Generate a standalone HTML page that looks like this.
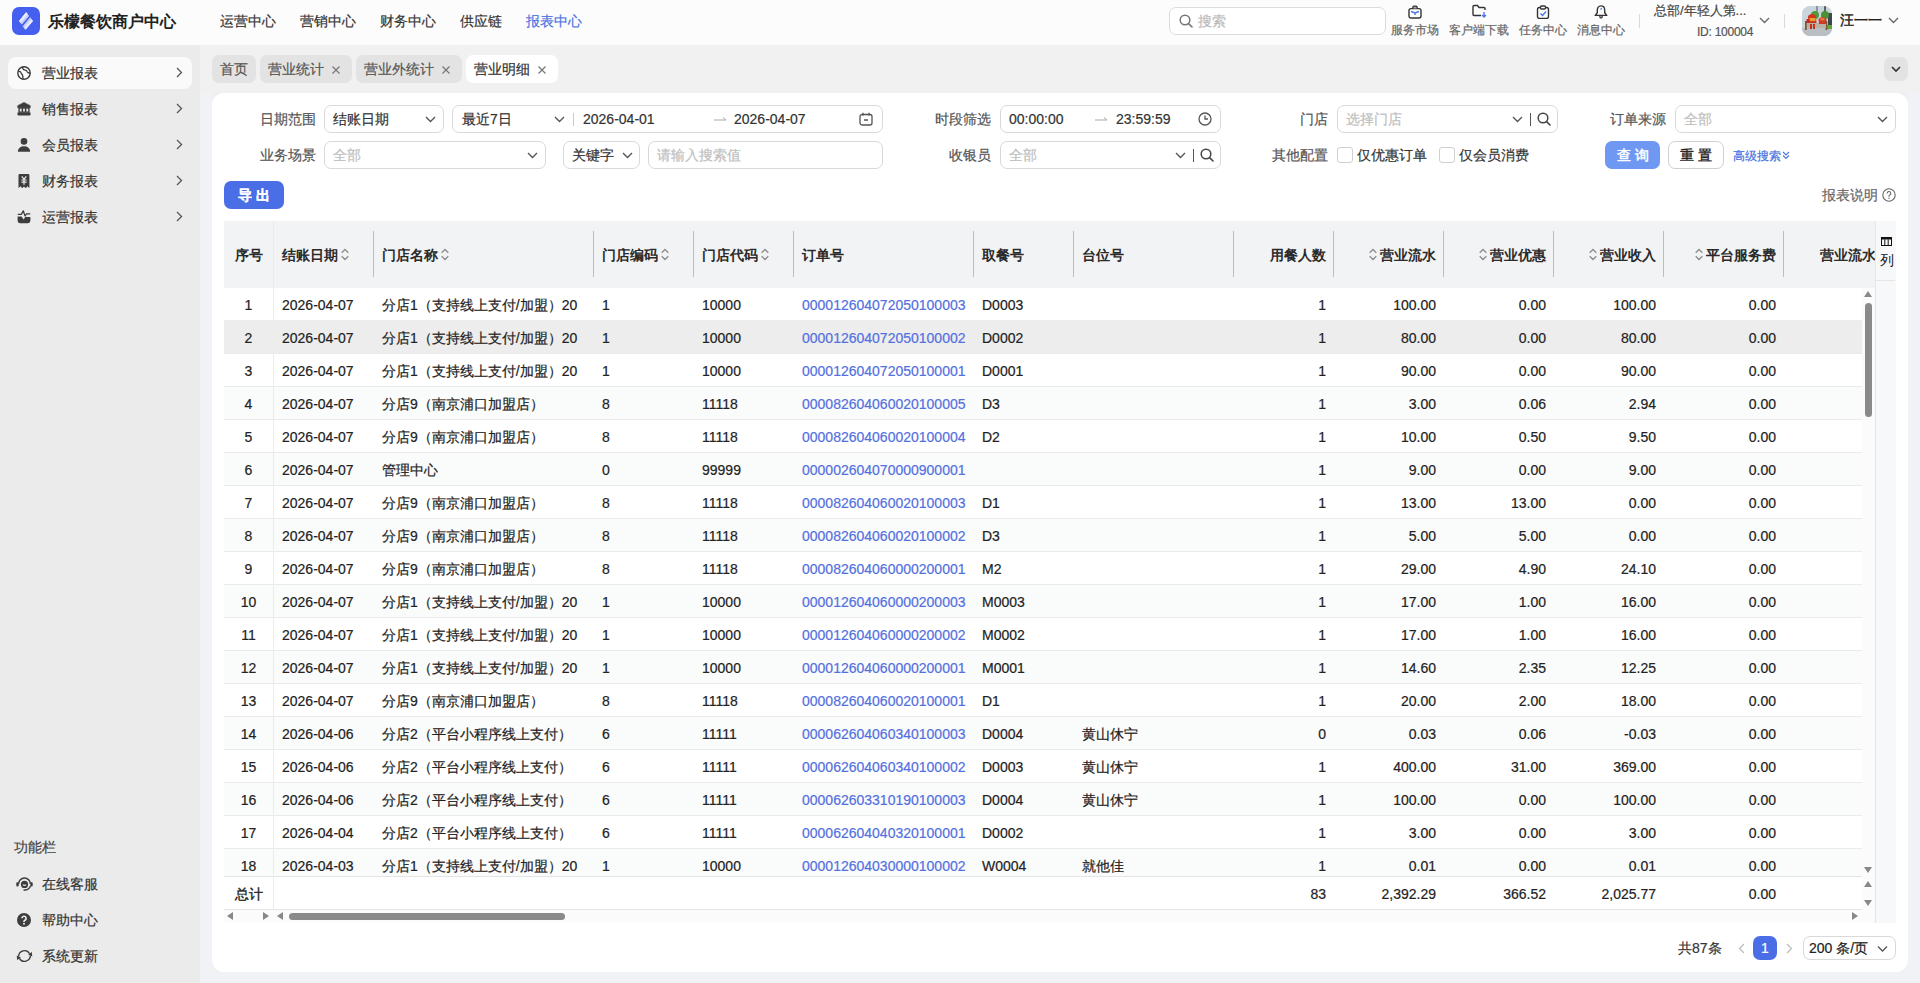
<!DOCTYPE html>
<html><head><meta charset="utf-8">
<style>
*{box-sizing:border-box;margin:0;padding:0}
html,body{width:1920px;height:983px;overflow:hidden}
body{font-family:"Liberation Sans",sans-serif;font-size:14px;color:#333;background:#f0f2f5;position:relative;-webkit-text-stroke:0.2px currentColor}
#band{position:absolute;left:200px;top:45px;width:1720px;height:48px;background:#f1f1f1}
#under{position:absolute;left:212px;top:93px;width:1696px;height:879px;background:#f0f0f0}
.abs{position:absolute}
svg{display:block}
/* header */
#hdr{position:absolute;left:0;top:0;width:1920px;height:45px;background:#fcfcfc}
#logo{position:absolute;left:12px;top:7px;width:28px;height:28px;border-radius:7px;background:#4560ef}
#brand{position:absolute;left:48px;top:11px;font-size:16px;font-weight:bold;color:#222;line-height:22px}
.nav{position:absolute;top:11px;line-height:20px;font-size:14px;color:#333}
.nav.on{color:#4a74e0}
#search{position:absolute;left:1169px;top:7px;width:217px;height:28px;border:1px solid #dcdcdc;border-radius:7px;background:#fff}
#search .ph{position:absolute;left:28px;top:4px;line-height:18px;color:#bbb;font-size:14px}
.tool{position:absolute;top:0;height:45px;text-align:center;font-size:12px;color:#666}
.tool .ic{position:absolute;top:5px;left:50%;margin-left:-7px}
.tool .tx{position:absolute;top:22px;left:0;right:0;line-height:16px;white-space:nowrap}
.vsep{position:absolute;width:1px;background:#d9d9d9}
/* sidebar */
#side{position:absolute;left:0;top:45px;width:200px;height:938px;background:#ebebeb}
.mi{position:absolute;left:8px;width:184px;height:32px;border-radius:8px}
.mi.on{background:#fafafa}
.mi .ic{position:absolute;left:9px;top:9px}
.mi .tx{position:absolute;left:34px;top:6px;line-height:20px;color:#333;font-size:14px}
.mi .ar{position:absolute;left:168px;top:10px}
/* tabs */
.tab{position:absolute;top:55px;height:28px;border-radius:7px;background:#e3e3e3;color:#555;font-size:14px;line-height:28px;padding-left:8px}
.tab.on{background:#fff;color:#333}
.tab .x{position:absolute;top:11px}
#tabdd{position:absolute;left:1884px;top:57px;width:24px;height:24px;border-radius:7px;background:#e3e3e3}
/* card */
#card{position:absolute;left:212px;top:93px;width:1696px;height:879px;background:#fff;border-radius:12px}
.lbl{position:absolute;line-height:20px;color:#555;font-size:14px;text-align:right}
.inp{position:absolute;height:28px;border:1px solid #d9d9d9;border-radius:7px;background:#fff}
.inp .t{position:absolute;top:3px;line-height:20px;font-size:14px;color:#333;white-space:nowrap}
.inp .ph{color:#c0c0c0}
.inp .cv{position:absolute;top:10px}
.inp .bar{position:absolute;top:7px;width:1px;height:13px;background:#555}
.cb{position:absolute;width:16px;height:16px;border:1px solid #d0d0d0;border-radius:3px;background:#fff}
.btn{position:absolute;height:28px;border-radius:7px;font-size:14px;line-height:26px;text-align:center;font-weight:bold;letter-spacing:4px;text-indent:4px}
/* table */
#tbl{position:absolute;left:224px;top:221px;width:1652px;height:702px;overflow:hidden}
#thead{position:absolute;left:0;top:0;width:1652px;height:67px;background:#f2f3f5}
.th{position:absolute;top:0;height:67px;line-height:69px;font-weight:bold;font-size:14px;color:#2a2a2a;padding:0 7px 0 9px;white-space:nowrap}
.th.c{text-align:center;padding:0}
.th,#brand{-webkit-text-stroke:0}
.th.r{text-align:right}
.th .sep{position:absolute;left:0;top:10px;width:1px;height:46px;background:#b9bdc8}
.th .sort{display:inline-block;vertical-align:middle;margin:0 3px 0 3px;position:relative;top:-2px}
#body{position:absolute;left:0;top:67px;width:1638px;height:588px;overflow:hidden}
.tr{position:absolute;left:0;width:1638px;height:33px;background:#fff;border-bottom:1px solid #ebebeb}
.tr.st{background:#fafbfb}
.tr.hv{background:#ededed}
.td{position:absolute;top:1px;height:32px;line-height:32px;padding:0 7px 0 9px;white-space:nowrap;overflow:hidden;font-size:14px;color:#222}
.td.c{text-align:center;padding:0}
.td.r{text-align:right}
.td.lk{color:#5470e0}
.fix1{position:absolute;left:49px;width:1px;background:#ececec}
#foot{position:absolute;left:0;top:655px;width:1638px;height:34px;background:#fff;border-top:1px solid #e4e4e4;border-bottom:1px solid #e4e4e4}
#foot .td{top:1px;height:32px;line-height:32px}
#foot .td.c{-webkit-text-stroke:0.35px #222}
#hscroll{position:absolute;left:0;top:689px;width:1652px;height:13px;background:#fbfbfb}
#vsc{position:absolute;left:1638px;top:67px;width:14px;height:622px;background:#fbfbfb}
#colpanel{position:absolute;left:1875px;top:221px;width:21px;height:702px;background:#f7f8fa;border-left:1px solid #e6e6e6}
.tri{position:absolute;width:0;height:0}
</style></head><body>
<div id="band"></div>
<div id="hdr">
  <div id="logo"><svg width="28" height="28" viewBox="0 0 28 28"><defs><linearGradient id="g1" gradientUnits="userSpaceOnUse" x1="10" y1="10" x2="13.5" y2="13"><stop offset="0" stop-color="#fff"/><stop offset="1" stop-color="#b9c3fa"/></linearGradient><linearGradient id="g2" gradientUnits="userSpaceOnUse" x1="18" y1="18" x2="14.5" y2="15"><stop offset="0" stop-color="#fff"/><stop offset="1" stop-color="#b9c3fa"/></linearGradient></defs><path d="M14.2 5.6 L16.7 9.1 L9.8 17.1 L7.4 14 Z" fill="url(#g1)" stroke="url(#g1)" stroke-width="0.9" stroke-linejoin="round"/><path d="M18.1 10.7 L20.6 14 L13.5 22.3 L11.1 19.3 Z" fill="url(#g2)" stroke="url(#g2)" stroke-width="0.9" stroke-linejoin="round"/></svg></div>
  <div id="brand">乐檬餐饮商户中心</div>
  <div class="nav" style="left:220px">运营中心</div>
  <div class="nav" style="left:300px">营销中心</div>
  <div class="nav" style="left:380px">财务中心</div>
  <div class="nav" style="left:460px">供应链</div>
  <div class="nav on" style="left:526px">报表中心</div>
  <div id="search"><div class="abs" style="left:9px;top:6px"><svg width="14" height="14" viewBox="0 0 14 14"><circle cx="6" cy="6" r="4.8" fill="none" stroke="#777" stroke-width="1.5"/><path d="M9.6 9.6L13 13" stroke="#777" stroke-width="1.6" stroke-linecap="round"/></svg></div><div class="ph">搜索</div></div>
  <div class="tool" style="left:1391px;width:48px"><div class="ic"><svg width="14" height="14" viewBox="0 0 14 14"><rect x="1" y="3.6" width="12" height="9.4" rx="2" fill="#fff" stroke="#333" stroke-width="1.4"/><path d="M4.9 3.6V2.3Q4.9 1.2 6 1.2H8Q9.1 1.2 9.1 2.3V3.6" fill="#aaa" stroke="#333" stroke-width="1.3"/><path d="M3 6.5l4 1.5 4-1.5M7 8v2" fill="none" stroke="#4a74f0" stroke-width="1.4"/></svg></div><div class="tx">服务市场</div></div>
  <div class="tool" style="left:1449px;width:60px"><div class="ic" style="margin-left:-7px;top:4px"><svg width="16" height="14" viewBox="0 0 16 14"><path d="M13 6V4.5c0-.6-.4-1-1-1H7L5.5 1.5H2c-.6 0-1 .4-1 1v8c0 .6.4 1 1 1h7" fill="none" stroke="#333" stroke-width="1.4"/><path d="M12 8v5M10 11l2 2 2-2" fill="none" stroke="#4a74f0" stroke-width="1.4"/></svg></div><div class="tx">客户端下载</div></div>
  <div class="tool" style="left:1519px;width:48px"><div class="ic"><svg width="14" height="14" viewBox="0 0 14 14"><rect x="1.5" y="2.5" width="11" height="11" rx="2" fill="none" stroke="#333" stroke-width="1.4"/><rect x="4.5" y="1" width="5" height="3" rx="1" fill="#fcfcfc" stroke="#333" stroke-width="1.3"/><path d="M4.5 8.5l2 2 3.5-4" fill="none" stroke="#4a74f0" stroke-width="1.4"/></svg></div><div class="tx">任务中心</div></div>
  <div class="tool" style="left:1577px;width:48px"><div class="ic"><svg width="14" height="14" viewBox="0 0 14 14"><path d="M7 .9C4.6 .9 3.3 2.9 3.3 5.2V7.8L1.2 10.4H12.8L10.7 7.8V5.2C10.7 2.9 9.4 .9 7 .9Z" fill="none" stroke="#333" stroke-width="1.4" stroke-linejoin="round"/><path d="M5.9 10.6V11.7Q5.9 12.9 7 12.9 8.1 12.9 8.1 11.7V10.6" fill="none" stroke="#333" stroke-width="1.3"/><path d="M6.6 4.6L7.6 3.1" stroke="#4a74f0" stroke-width="1.2" fill="none"/></svg></div><div class="tx">消息中心</div></div>
  <div class="vsep" style="left:1639px;top:14px;height:14px"></div>
  <div class="abs" style="left:1654px;top:3px;line-height:16px;font-size:13px;color:#444;white-space:nowrap">总部/年轻人第...</div>
  <div class="abs" style="left:1697px;top:24px;line-height:16px;font-size:12px;color:#555;white-space:nowrap;letter-spacing:-0.25px">ID: 100004</div>
  <div class="abs" style="left:1759px;top:17px"><svg width="11" height="7" viewBox="0 0 11 7"><path d="M1 1l4.5 4.5L10 1" fill="none" stroke="#666" stroke-width="1.3"/></svg></div>
  <div class="vsep" style="left:1784px;top:14px;height:14px"></div>
  <div class="abs" style="left:1802px;top:6px;width:30px;height:30px;border-radius:8px;overflow:hidden"><svg width="30" height="30" viewBox="0 0 30 30"><rect width="30" height="30" fill="#c9d5dc"/><rect x="14" y="0" width="2" height="10" fill="#8c969c"/><rect x="22" y="0" width="2" height="8" fill="#5a6268"/><rect x="26" y="7" width="4" height="12" fill="#3f474c"/><circle cx="13" cy="9" r="4" fill="#4f9a3c"/><circle cx="23" cy="9" r="4" fill="#4a9238"/><rect x="0" y="22" width="30" height="8" fill="#b9bec2"/><rect x="25" y="19" width="5" height="4" fill="#5aa83c"/><rect x="3" y="15" width="1.8" height="9" fill="#7a5a30"/><rect x="23.5" y="15" width="1.8" height="9" fill="#7a5a30"/><rect x="5" y="17" width="19" height="5" fill="#b8b2a6"/><path d="M6 10 Q10 6 14 10 L14.5 17 H6.5 Z" fill="#d4341c"/><rect x="7.5" y="12" width="6" height="3" fill="#e8a030"/><rect x="4.5" y="13" width="3" height="4" fill="#c42818"/><rect x="8" y="18" width="2" height="5" fill="#d22a1a"/><rect x="11" y="18" width="2" height="5" fill="#d22a1a"/><path d="M16.5 13 Q20.5 9 24.5 13 L24 18 H17 Z" fill="#cf3a22"/><rect x="18.5" y="12" width="4" height="2.5" fill="#e07a40"/></svg></div>
  <div class="abs" style="left:1840px;top:10px;line-height:20px;font-size:14px;color:#222;-webkit-text-stroke:0.45px #222">汪一一</div>
  <div class="abs" style="left:1888px;top:17px"><svg width="11" height="7" viewBox="0 0 11 7"><path d="M1 1l4.5 4.5L10 1" fill="none" stroke="#666" stroke-width="1.3"/></svg></div>
</div>

<div id="side">
  <div class="mi on" style="top:12px"><div class="ic"><svg width="14" height="14" viewBox="0 0 14 14"><circle cx="7" cy="7" r="6.2" fill="none" stroke="#3a3a3a" stroke-width="1.4"/><path d="M1.2 5.4c1.5-.3 2.7.5 3 1.7.3 1.3 1.4 1.6 1.6 2.8.2 1-.2 2.2.3 3.3M5.9.9c-.5 1.3.1 2.6 1.4 3 1.3.3 2.5.5 2.8 1.8.3 1.1 1.5 1.5 3 1.2" fill="none" stroke="#3a3a3a" stroke-width="1.3"/></svg></div><div class="tx">营业报表</div><div class="ar"><svg width="7" height="11" viewBox="0 0 7 11"><path d="M1 1l4.5 4.5L1 10" fill="none" stroke="#555" stroke-width="1.3"/></svg></div></div>
  <div class="mi" style="top:48px"><div class="ic"><svg width="14" height="14" viewBox="0 0 14 14"><path d="M7 .4L13.3 3.7V5.7H.7V3.7z" fill="#3d3d3d" stroke="#3d3d3d" stroke-width=".6" stroke-linejoin="round"/><rect x="1.4" y="5.5" width="11.2" height="5" fill="#3d3d3d"/><rect x=".5" y="10.2" width="13" height="3.4" rx="1" fill="#3d3d3d"/><rect x="2.8" y="6.7" width="1.8" height="2.8" fill="#ebebeb"/><rect x="6.1" y="6.7" width="1.8" height="2.8" fill="#ebebeb"/><rect x="9.4" y="6.7" width="1.8" height="2.8" fill="#ebebeb"/></svg></div><div class="tx">销售报表</div><div class="ar"><svg width="7" height="11" viewBox="0 0 7 11"><path d="M1 1l4.5 4.5L1 10" fill="none" stroke="#555" stroke-width="1.3"/></svg></div></div>
  <div class="mi" style="top:84px"><div class="ic"><svg width="14" height="14" viewBox="0 0 14 14"><circle cx="7" cy="3.4" r="3.3" fill="#3d3d3d"/><path d="M.9 13.8C.9 10.2 3.7 8.3 7 8.3s6.1 1.9 6.1 5.5z" fill="#3d3d3d"/></svg></div><div class="tx">会员报表</div><div class="ar"><svg width="7" height="11" viewBox="0 0 7 11"><path d="M1 1l4.5 4.5L1 10" fill="none" stroke="#555" stroke-width="1.3"/></svg></div></div>
  <div class="mi" style="top:120px"><div class="ic"><svg width="14" height="14" viewBox="0 0 14 14"><path d="M1.5 1.2Q1.5 0 2.7 0H11.2Q12.4 0 12.4 1.2V14.2L10.5 12.2 8.7 14.2 7 12.4 5.2 14.2 3.4 12.2 1.5 14.2z" fill="#3d3d3d"/><path d="M4.7 2.4L7 5.2 9.3 2.4M4.4 6H9.6M4.4 8.2H9.6M7 5.2V10.8" fill="none" stroke="#ebebeb" stroke-width="1.2"/></svg></div><div class="tx">财务报表</div><div class="ar"><svg width="7" height="11" viewBox="0 0 7 11"><path d="M1 1l4.5 4.5L1 10" fill="none" stroke="#555" stroke-width="1.3"/></svg></div></div>
  <div class="mi" style="top:156px"><div class="ic"><svg width="14" height="14" viewBox="0 0 14 14"><path d="M.8 4.3H4.3L6.3.9 8 5.8 9.6 3.8H13.2" fill="none" stroke="#3d3d3d" stroke-width="1.3" stroke-linejoin="round"/><path d="M.6 6.4H4.6L6.6 9.4 8.5 6.5 9.6 7H13.4V10.8Q13.4 13.2 11 13.2H3Q.6 13.2 .6 10.8z" fill="#3d3d3d"/></svg></div><div class="tx">运营报表</div><div class="ar"><svg width="7" height="11" viewBox="0 0 7 11"><path d="M1 1l4.5 4.5L1 10" fill="none" stroke="#555" stroke-width="1.3"/></svg></div></div>

  <div class="abs" style="left:14px;top:792px;line-height:20px;color:#444;font-size:14px">功能栏</div>
  <div class="mi" style="top:823px"><div class="ic" style="left:8px;top:9px"><svg width="17" height="14" viewBox="0 0 17 14"><path d="M2.6 7A5.9 5.9 0 0 1 14.4 7" fill="none" stroke="#3d3d3d" stroke-width="1.5"/><rect x=".3" y="5.2" width="2.4" height="4.2" rx=".9" fill="#3d3d3d"/><rect x="14.3" y="5.2" width="2.4" height="4.2" rx=".9" fill="#3d3d3d"/><circle cx="8.5" cy="7.4" r="3.6" fill="#3d3d3d"/><path d="M6.9 7.6Q8.5 9.1 10.1 7.6" fill="none" stroke="#ebebeb" stroke-width="1.1"/><path d="M14.4 9A5.9 5.9 0 0 1 9.5 13H7.5" fill="none" stroke="#3d3d3d" stroke-width="1.4"/></svg></div><div class="tx">在线客服</div></div>
  <div class="mi" style="top:859px"><div class="ic"><svg width="14" height="14" viewBox="0 0 14 14"><circle cx="7" cy="7" r="7" fill="#3d3d3d"/><path d="M4.9 5.3a2.1 2.1 0 1 1 3 1.9c-.6.3-.9.7-.9 1.4v.4" fill="none" stroke="#ebebeb" stroke-width="1.6"/><circle cx="7" cy="10.7" r="1" fill="#ebebeb"/></svg></div><div class="tx">帮助中心</div></div>
  <div class="mi" style="top:895px"><div class="ic" style="left:8px"><svg width="17" height="14" viewBox="0 0 17 14"><path d="M2.6 7.4A5.9 5.9 0 0 1 13.6 4.6" fill="none" stroke="#3d3d3d" stroke-width="1.4"/><path d="M12.2 5.5L16.2 7.6 15.9 3z" fill="#3d3d3d"/><path d="M14.4 6.6A5.9 5.9 0 0 1 3.4 9.4" fill="none" stroke="#3d3d3d" stroke-width="1.4"/><path d="M4.8 8.5L.8 6.4 1.1 11z" fill="#3d3d3d"/></svg></div><div class="tx">系统更新</div></div>
</div>

<div class="tab" style="left:212px;width:44px">首页</div>
<div class="tab" style="left:260px;width:92px">营业统计<svg class="x" style="left:72px" width="8" height="8" viewBox="0 0 8 8"><path d="M.5.5l7 7M7.5.5l-7 7" stroke="#777" stroke-width="1.2"/></svg></div>
<div class="tab" style="left:356px;width:106px">营业外统计<svg class="x" style="left:86px" width="8" height="8" viewBox="0 0 8 8"><path d="M.5.5l7 7M7.5.5l-7 7" stroke="#777" stroke-width="1.2"/></svg></div>
<div class="tab on" style="left:466px;width:92px">营业明细<svg class="x" style="left:72px" width="8" height="8" viewBox="0 0 8 8"><path d="M.5.5l7 7M7.5.5l-7 7" stroke="#777" stroke-width="1.2"/></svg></div>
<div id="tabdd"><div class="abs" style="left:7px;top:9px"><svg width="10" height="7" viewBox="0 0 10 7"><path d="M1 1l4 4 4-4" fill="none" stroke="#333" stroke-width="1.6"/></svg></div></div>

<div id="under"></div><div id="card"></div>

<!-- filters row 1 -->
<div class="lbl" style="left:240px;top:109px;width:76px">日期范围</div>
<div class="inp" style="left:324px;top:105px;width:120px"><div class="t" style="left:8px">结账日期</div><div class="cv" style="left:100px"><svg width="11" height="7" viewBox="0 0 11 7"><path d="M1 1l4.5 4.5L10 1" fill="none" stroke="#555" stroke-width="1.4"/></svg></div></div>
<div class="inp" style="left:452px;top:105px;width:431px"><div class="t" style="left:9px">最近7日</div><div class="cv" style="left:101px"><svg width="11" height="7" viewBox="0 0 11 7"><path d="M1 1l4.5 4.5L10 1" fill="none" stroke="#555" stroke-width="1.4"/></svg></div><div class="bar" style="left:120px;background:#ccc"></div><div class="t" style="left:130px">2026-04-01</div><div class="abs" style="left:261px;top:11px"><svg width="13" height="4" viewBox="0 0 13 4"><path d="M0 3h12L9 .5" fill="none" stroke="#aaa" stroke-width="1"/></svg></div><div class="t" style="left:281px">2026-04-07</div><div class="abs" style="left:406px;top:6px"><svg width="14" height="14" viewBox="0 0 14 14"><rect x="1" y="2.5" width="12" height="10.5" rx="2" fill="none" stroke="#555" stroke-width="1.3"/><path d="M4 .8v3M10 .8v3M5 8h4" stroke="#555" stroke-width="1.3"/></svg></div></div>
<div class="lbl" style="left:915px;top:109px;width:76px">时段筛选</div>
<div class="inp" style="left:1000px;top:105px;width:221px"><div class="t" style="left:8px">00:00:00</div><div class="abs" style="left:94px;top:11px"><svg width="13" height="4" viewBox="0 0 13 4"><path d="M0 3h12L9 .5" fill="none" stroke="#aaa" stroke-width="1"/></svg></div><div class="t" style="left:115px">23:59:59</div><div class="abs" style="left:197px;top:6px"><svg width="14" height="14" viewBox="0 0 14 14"><circle cx="7" cy="7" r="6" fill="none" stroke="#555" stroke-width="1.3"/><path d="M7 3.5V7h3" fill="none" stroke="#555" stroke-width="1.3"/></svg></div></div>
<div class="lbl" style="left:1252px;top:109px;width:76px">门店</div>
<div class="inp" style="left:1337px;top:105px;width:221px"><div class="t ph" style="left:8px">选择门店</div><div class="cv" style="left:174px"><svg width="11" height="7" viewBox="0 0 11 7"><path d="M1 1l4.5 4.5L10 1" fill="none" stroke="#555" stroke-width="1.4"/></svg></div><div class="bar" style="left:192px"></div><div class="abs" style="left:199px;top:6px"><svg width="14" height="14" viewBox="0 0 14 14"><circle cx="6" cy="6" r="4.8" fill="none" stroke="#444" stroke-width="1.5"/><path d="M9.6 9.6L13 13" stroke="#444" stroke-width="1.6" stroke-linecap="round"/></svg></div></div>
<div class="lbl" style="left:1590px;top:109px;width:76px">订单来源</div>
<div class="inp" style="left:1675px;top:105px;width:221px"><div class="t ph" style="left:8px">全部</div><div class="cv" style="left:201px"><svg width="11" height="7" viewBox="0 0 11 7"><path d="M1 1l4.5 4.5L10 1" fill="none" stroke="#555" stroke-width="1.4"/></svg></div></div>

<!-- filters row 2 -->
<div class="lbl" style="left:240px;top:145px;width:76px">业务场景</div>
<div class="inp" style="left:324px;top:141px;width:222px"><div class="t ph" style="left:8px">全部</div><div class="cv" style="left:202px"><svg width="11" height="7" viewBox="0 0 11 7"><path d="M1 1l4.5 4.5L10 1" fill="none" stroke="#555" stroke-width="1.4"/></svg></div></div>
<div class="inp" style="left:563px;top:141px;width:77px"><div class="t" style="left:8px">关键字</div><div class="cv" style="left:58px"><svg width="11" height="7" viewBox="0 0 11 7"><path d="M1 1l4.5 4.5L10 1" fill="none" stroke="#555" stroke-width="1.4"/></svg></div></div>
<div class="inp" style="left:648px;top:141px;width:235px"><div class="t ph" style="left:8px">请输入搜索值</div></div>
<div class="lbl" style="left:915px;top:145px;width:76px">收银员</div>
<div class="inp" style="left:1000px;top:141px;width:221px"><div class="t ph" style="left:8px">全部</div><div class="cv" style="left:174px"><svg width="11" height="7" viewBox="0 0 11 7"><path d="M1 1l4.5 4.5L10 1" fill="none" stroke="#555" stroke-width="1.4"/></svg></div><div class="bar" style="left:192px"></div><div class="abs" style="left:199px;top:6px"><svg width="14" height="14" viewBox="0 0 14 14"><circle cx="6" cy="6" r="4.8" fill="none" stroke="#444" stroke-width="1.5"/><path d="M9.6 9.6L13 13" stroke="#444" stroke-width="1.6" stroke-linecap="round"/></svg></div></div>
<div class="lbl" style="left:1252px;top:145px;width:76px">其他配置</div>
<div class="cb" style="left:1337px;top:147px"></div>
<div class="abs" style="left:1357px;top:145px;line-height:20px;color:#333">仅优惠订单</div>
<div class="cb" style="left:1439px;top:147px"></div>
<div class="abs" style="left:1459px;top:145px;line-height:20px;color:#333">仅会员消费</div>
<div class="btn" style="left:1605px;top:141px;width:55px;background:#6e98f2;color:#fff;line-height:28px;font-weight:normal;-webkit-text-stroke:0.5px #fff">查询</div>
<div class="btn" style="left:1668px;top:141px;width:56px;border:1px solid #d0d0d0;background:#fff;color:#222;font-weight:normal;-webkit-text-stroke:0.35px #222">重置</div>
<div class="abs" style="left:1733px;top:148px;line-height:16px;font-size:12px;color:#4a74e0;white-space:nowrap">高级搜索</div>
<div class="abs" style="left:1782px;top:151px"><svg width="8" height="9" viewBox="0 0 8 9"><path d="M1 1l3 3 3-3M1 4.5l3 3 3-3" fill="none" stroke="#4a74e0" stroke-width="1.1"/></svg></div>

<div class="btn" style="left:224px;top:181px;width:60px;background:#4a6ee6;color:#fff;line-height:28px">导出</div>
<div class="abs" style="left:1822px;top:185px;line-height:20px;color:#666">报表说明</div>
<div class="abs" style="left:1882px;top:188px"><svg width="14" height="14" viewBox="0 0 14 14"><circle cx="7" cy="7" r="6.2" fill="none" stroke="#666" stroke-width="1.1"/><path d="M5.2 5.4a1.8 1.8 0 1 1 2.5 1.6c-.5.3-.7.6-.7 1.2v.5" fill="none" stroke="#666" stroke-width="1.1"/><circle cx="7" cy="10.3" r=".7" fill="#666"/></svg></div>

<div id="tbl">
  <div id="thead"><div class="th c" style="left:0px;width:49px">序号</div><div class="th l" style="left:49px;width:100px">结账日期<svg class="sort" width="8" height="13" viewBox="0 0 8 13"><path d="M.7 4.8L4 1.5l3.3 3.3M.7 8.2L4 11.5l3.3-3.3" fill="none" stroke="#8c8c8c" stroke-width="1.25"/></svg></div><div class="th l" style="left:149px;width:220px"><span class="sep"></span>门店名称<svg class="sort" width="8" height="13" viewBox="0 0 8 13"><path d="M.7 4.8L4 1.5l3.3 3.3M.7 8.2L4 11.5l3.3-3.3" fill="none" stroke="#8c8c8c" stroke-width="1.25"/></svg></div><div class="th l" style="left:369px;width:100px"><span class="sep"></span>门店编码<svg class="sort" width="8" height="13" viewBox="0 0 8 13"><path d="M.7 4.8L4 1.5l3.3 3.3M.7 8.2L4 11.5l3.3-3.3" fill="none" stroke="#8c8c8c" stroke-width="1.25"/></svg></div><div class="th l" style="left:469px;width:100px"><span class="sep"></span>门店代码<svg class="sort" width="8" height="13" viewBox="0 0 8 13"><path d="M.7 4.8L4 1.5l3.3 3.3M.7 8.2L4 11.5l3.3-3.3" fill="none" stroke="#8c8c8c" stroke-width="1.25"/></svg></div><div class="th l" style="left:569px;width:180px"><span class="sep"></span>订单号</div><div class="th l" style="left:749px;width:100px"><span class="sep"></span>取餐号</div><div class="th l" style="left:849px;width:160px"><span class="sep"></span>台位号</div><div class="th r" style="left:1009px;width:100px"><span class="sep"></span>用餐人数</div><div class="th r" style="left:1109px;width:110px"><span class="sep"></span><svg class="sort" width="8" height="13" viewBox="0 0 8 13"><path d="M.7 4.8L4 1.5l3.3 3.3M.7 8.2L4 11.5l3.3-3.3" fill="none" stroke="#8c8c8c" stroke-width="1.25"/></svg>营业流水</div><div class="th r" style="left:1219px;width:110px"><span class="sep"></span><svg class="sort" width="8" height="13" viewBox="0 0 8 13"><path d="M.7 4.8L4 1.5l3.3 3.3M.7 8.2L4 11.5l3.3-3.3" fill="none" stroke="#8c8c8c" stroke-width="1.25"/></svg>营业优惠</div><div class="th r" style="left:1329px;width:110px"><span class="sep"></span><svg class="sort" width="8" height="13" viewBox="0 0 8 13"><path d="M.7 4.8L4 1.5l3.3 3.3M.7 8.2L4 11.5l3.3-3.3" fill="none" stroke="#8c8c8c" stroke-width="1.25"/></svg>营业收入</div><div class="th r" style="left:1439px;width:120px"><span class="sep"></span><svg class="sort" width="8" height="13" viewBox="0 0 8 13"><path d="M.7 4.8L4 1.5l3.3 3.3M.7 8.2L4 11.5l3.3-3.3" fill="none" stroke="#8c8c8c" stroke-width="1.25"/></svg>平台服务费</div><div class="th r" style="left:1559px;width:100px"><span class="sep"></span>营业流水</div></div>
  <div id="body">
<div class="tr" style="top:0px"><div class="td c" style="left:0px;width:49px">1</div><div class="td l" style="left:49px;width:100px">2026-04-07</div><div class="td l" style="left:149px;width:220px">分店1（支持线上支付/加盟）20</div><div class="td l" style="left:369px;width:100px">1</div><div class="td l" style="left:469px;width:100px">10000</div><div class="td l lk" style="left:569px;width:180px">000012604072050100003</div><div class="td l" style="left:749px;width:100px">D0003</div><div class="td l" style="left:849px;width:160px"></div><div class="td r" style="left:1009px;width:100px">1</div><div class="td r" style="left:1109px;width:110px">100.00</div><div class="td r" style="left:1219px;width:110px">0.00</div><div class="td r" style="left:1329px;width:110px">100.00</div><div class="td r" style="left:1439px;width:120px">0.00</div><div class="td r" style="left:1559px;width:100px"></div></div>
<div class="tr st hv" style="top:33px"><div class="td c" style="left:0px;width:49px">2</div><div class="td l" style="left:49px;width:100px">2026-04-07</div><div class="td l" style="left:149px;width:220px">分店1（支持线上支付/加盟）20</div><div class="td l" style="left:369px;width:100px">1</div><div class="td l" style="left:469px;width:100px">10000</div><div class="td l lk" style="left:569px;width:180px">000012604072050100002</div><div class="td l" style="left:749px;width:100px">D0002</div><div class="td l" style="left:849px;width:160px"></div><div class="td r" style="left:1009px;width:100px">1</div><div class="td r" style="left:1109px;width:110px">80.00</div><div class="td r" style="left:1219px;width:110px">0.00</div><div class="td r" style="left:1329px;width:110px">80.00</div><div class="td r" style="left:1439px;width:120px">0.00</div><div class="td r" style="left:1559px;width:100px"></div></div>
<div class="tr" style="top:66px"><div class="td c" style="left:0px;width:49px">3</div><div class="td l" style="left:49px;width:100px">2026-04-07</div><div class="td l" style="left:149px;width:220px">分店1（支持线上支付/加盟）20</div><div class="td l" style="left:369px;width:100px">1</div><div class="td l" style="left:469px;width:100px">10000</div><div class="td l lk" style="left:569px;width:180px">000012604072050100001</div><div class="td l" style="left:749px;width:100px">D0001</div><div class="td l" style="left:849px;width:160px"></div><div class="td r" style="left:1009px;width:100px">1</div><div class="td r" style="left:1109px;width:110px">90.00</div><div class="td r" style="left:1219px;width:110px">0.00</div><div class="td r" style="left:1329px;width:110px">90.00</div><div class="td r" style="left:1439px;width:120px">0.00</div><div class="td r" style="left:1559px;width:100px"></div></div>
<div class="tr st" style="top:99px"><div class="td c" style="left:0px;width:49px">4</div><div class="td l" style="left:49px;width:100px">2026-04-07</div><div class="td l" style="left:149px;width:220px">分店9（南京浦口加盟店）</div><div class="td l" style="left:369px;width:100px">8</div><div class="td l" style="left:469px;width:100px">11118</div><div class="td l lk" style="left:569px;width:180px">000082604060020100005</div><div class="td l" style="left:749px;width:100px">D3</div><div class="td l" style="left:849px;width:160px"></div><div class="td r" style="left:1009px;width:100px">1</div><div class="td r" style="left:1109px;width:110px">3.00</div><div class="td r" style="left:1219px;width:110px">0.06</div><div class="td r" style="left:1329px;width:110px">2.94</div><div class="td r" style="left:1439px;width:120px">0.00</div><div class="td r" style="left:1559px;width:100px"></div></div>
<div class="tr" style="top:132px"><div class="td c" style="left:0px;width:49px">5</div><div class="td l" style="left:49px;width:100px">2026-04-07</div><div class="td l" style="left:149px;width:220px">分店9（南京浦口加盟店）</div><div class="td l" style="left:369px;width:100px">8</div><div class="td l" style="left:469px;width:100px">11118</div><div class="td l lk" style="left:569px;width:180px">000082604060020100004</div><div class="td l" style="left:749px;width:100px">D2</div><div class="td l" style="left:849px;width:160px"></div><div class="td r" style="left:1009px;width:100px">1</div><div class="td r" style="left:1109px;width:110px">10.00</div><div class="td r" style="left:1219px;width:110px">0.50</div><div class="td r" style="left:1329px;width:110px">9.50</div><div class="td r" style="left:1439px;width:120px">0.00</div><div class="td r" style="left:1559px;width:100px"></div></div>
<div class="tr st" style="top:165px"><div class="td c" style="left:0px;width:49px">6</div><div class="td l" style="left:49px;width:100px">2026-04-07</div><div class="td l" style="left:149px;width:220px">管理中心</div><div class="td l" style="left:369px;width:100px">0</div><div class="td l" style="left:469px;width:100px">99999</div><div class="td l lk" style="left:569px;width:180px">000002604070000900001</div><div class="td l" style="left:749px;width:100px"></div><div class="td l" style="left:849px;width:160px"></div><div class="td r" style="left:1009px;width:100px">1</div><div class="td r" style="left:1109px;width:110px">9.00</div><div class="td r" style="left:1219px;width:110px">0.00</div><div class="td r" style="left:1329px;width:110px">9.00</div><div class="td r" style="left:1439px;width:120px">0.00</div><div class="td r" style="left:1559px;width:100px"></div></div>
<div class="tr" style="top:198px"><div class="td c" style="left:0px;width:49px">7</div><div class="td l" style="left:49px;width:100px">2026-04-07</div><div class="td l" style="left:149px;width:220px">分店9（南京浦口加盟店）</div><div class="td l" style="left:369px;width:100px">8</div><div class="td l" style="left:469px;width:100px">11118</div><div class="td l lk" style="left:569px;width:180px">000082604060020100003</div><div class="td l" style="left:749px;width:100px">D1</div><div class="td l" style="left:849px;width:160px"></div><div class="td r" style="left:1009px;width:100px">1</div><div class="td r" style="left:1109px;width:110px">13.00</div><div class="td r" style="left:1219px;width:110px">13.00</div><div class="td r" style="left:1329px;width:110px">0.00</div><div class="td r" style="left:1439px;width:120px">0.00</div><div class="td r" style="left:1559px;width:100px"></div></div>
<div class="tr st" style="top:231px"><div class="td c" style="left:0px;width:49px">8</div><div class="td l" style="left:49px;width:100px">2026-04-07</div><div class="td l" style="left:149px;width:220px">分店9（南京浦口加盟店）</div><div class="td l" style="left:369px;width:100px">8</div><div class="td l" style="left:469px;width:100px">11118</div><div class="td l lk" style="left:569px;width:180px">000082604060020100002</div><div class="td l" style="left:749px;width:100px">D3</div><div class="td l" style="left:849px;width:160px"></div><div class="td r" style="left:1009px;width:100px">1</div><div class="td r" style="left:1109px;width:110px">5.00</div><div class="td r" style="left:1219px;width:110px">5.00</div><div class="td r" style="left:1329px;width:110px">0.00</div><div class="td r" style="left:1439px;width:120px">0.00</div><div class="td r" style="left:1559px;width:100px"></div></div>
<div class="tr" style="top:264px"><div class="td c" style="left:0px;width:49px">9</div><div class="td l" style="left:49px;width:100px">2026-04-07</div><div class="td l" style="left:149px;width:220px">分店9（南京浦口加盟店）</div><div class="td l" style="left:369px;width:100px">8</div><div class="td l" style="left:469px;width:100px">11118</div><div class="td l lk" style="left:569px;width:180px">000082604060000200001</div><div class="td l" style="left:749px;width:100px">M2</div><div class="td l" style="left:849px;width:160px"></div><div class="td r" style="left:1009px;width:100px">1</div><div class="td r" style="left:1109px;width:110px">29.00</div><div class="td r" style="left:1219px;width:110px">4.90</div><div class="td r" style="left:1329px;width:110px">24.10</div><div class="td r" style="left:1439px;width:120px">0.00</div><div class="td r" style="left:1559px;width:100px"></div></div>
<div class="tr st" style="top:297px"><div class="td c" style="left:0px;width:49px">10</div><div class="td l" style="left:49px;width:100px">2026-04-07</div><div class="td l" style="left:149px;width:220px">分店1（支持线上支付/加盟）20</div><div class="td l" style="left:369px;width:100px">1</div><div class="td l" style="left:469px;width:100px">10000</div><div class="td l lk" style="left:569px;width:180px">000012604060000200003</div><div class="td l" style="left:749px;width:100px">M0003</div><div class="td l" style="left:849px;width:160px"></div><div class="td r" style="left:1009px;width:100px">1</div><div class="td r" style="left:1109px;width:110px">17.00</div><div class="td r" style="left:1219px;width:110px">1.00</div><div class="td r" style="left:1329px;width:110px">16.00</div><div class="td r" style="left:1439px;width:120px">0.00</div><div class="td r" style="left:1559px;width:100px"></div></div>
<div class="tr" style="top:330px"><div class="td c" style="left:0px;width:49px">11</div><div class="td l" style="left:49px;width:100px">2026-04-07</div><div class="td l" style="left:149px;width:220px">分店1（支持线上支付/加盟）20</div><div class="td l" style="left:369px;width:100px">1</div><div class="td l" style="left:469px;width:100px">10000</div><div class="td l lk" style="left:569px;width:180px">000012604060000200002</div><div class="td l" style="left:749px;width:100px">M0002</div><div class="td l" style="left:849px;width:160px"></div><div class="td r" style="left:1009px;width:100px">1</div><div class="td r" style="left:1109px;width:110px">17.00</div><div class="td r" style="left:1219px;width:110px">1.00</div><div class="td r" style="left:1329px;width:110px">16.00</div><div class="td r" style="left:1439px;width:120px">0.00</div><div class="td r" style="left:1559px;width:100px"></div></div>
<div class="tr st" style="top:363px"><div class="td c" style="left:0px;width:49px">12</div><div class="td l" style="left:49px;width:100px">2026-04-07</div><div class="td l" style="left:149px;width:220px">分店1（支持线上支付/加盟）20</div><div class="td l" style="left:369px;width:100px">1</div><div class="td l" style="left:469px;width:100px">10000</div><div class="td l lk" style="left:569px;width:180px">000012604060000200001</div><div class="td l" style="left:749px;width:100px">M0001</div><div class="td l" style="left:849px;width:160px"></div><div class="td r" style="left:1009px;width:100px">1</div><div class="td r" style="left:1109px;width:110px">14.60</div><div class="td r" style="left:1219px;width:110px">2.35</div><div class="td r" style="left:1329px;width:110px">12.25</div><div class="td r" style="left:1439px;width:120px">0.00</div><div class="td r" style="left:1559px;width:100px"></div></div>
<div class="tr" style="top:396px"><div class="td c" style="left:0px;width:49px">13</div><div class="td l" style="left:49px;width:100px">2026-04-07</div><div class="td l" style="left:149px;width:220px">分店9（南京浦口加盟店）</div><div class="td l" style="left:369px;width:100px">8</div><div class="td l" style="left:469px;width:100px">11118</div><div class="td l lk" style="left:569px;width:180px">000082604060020100001</div><div class="td l" style="left:749px;width:100px">D1</div><div class="td l" style="left:849px;width:160px"></div><div class="td r" style="left:1009px;width:100px">1</div><div class="td r" style="left:1109px;width:110px">20.00</div><div class="td r" style="left:1219px;width:110px">2.00</div><div class="td r" style="left:1329px;width:110px">18.00</div><div class="td r" style="left:1439px;width:120px">0.00</div><div class="td r" style="left:1559px;width:100px"></div></div>
<div class="tr st" style="top:429px"><div class="td c" style="left:0px;width:49px">14</div><div class="td l" style="left:49px;width:100px">2026-04-06</div><div class="td l" style="left:149px;width:220px">分店2（平台小程序线上支付）</div><div class="td l" style="left:369px;width:100px">6</div><div class="td l" style="left:469px;width:100px">11111</div><div class="td l lk" style="left:569px;width:180px">000062604060340100003</div><div class="td l" style="left:749px;width:100px">D0004</div><div class="td l" style="left:849px;width:160px">黄山休宁</div><div class="td r" style="left:1009px;width:100px">0</div><div class="td r" style="left:1109px;width:110px">0.03</div><div class="td r" style="left:1219px;width:110px">0.06</div><div class="td r" style="left:1329px;width:110px">-0.03</div><div class="td r" style="left:1439px;width:120px">0.00</div><div class="td r" style="left:1559px;width:100px"></div></div>
<div class="tr" style="top:462px"><div class="td c" style="left:0px;width:49px">15</div><div class="td l" style="left:49px;width:100px">2026-04-06</div><div class="td l" style="left:149px;width:220px">分店2（平台小程序线上支付）</div><div class="td l" style="left:369px;width:100px">6</div><div class="td l" style="left:469px;width:100px">11111</div><div class="td l lk" style="left:569px;width:180px">000062604060340100002</div><div class="td l" style="left:749px;width:100px">D0003</div><div class="td l" style="left:849px;width:160px">黄山休宁</div><div class="td r" style="left:1009px;width:100px">1</div><div class="td r" style="left:1109px;width:110px">400.00</div><div class="td r" style="left:1219px;width:110px">31.00</div><div class="td r" style="left:1329px;width:110px">369.00</div><div class="td r" style="left:1439px;width:120px">0.00</div><div class="td r" style="left:1559px;width:100px"></div></div>
<div class="tr st" style="top:495px"><div class="td c" style="left:0px;width:49px">16</div><div class="td l" style="left:49px;width:100px">2026-04-06</div><div class="td l" style="left:149px;width:220px">分店2（平台小程序线上支付）</div><div class="td l" style="left:369px;width:100px">6</div><div class="td l" style="left:469px;width:100px">11111</div><div class="td l lk" style="left:569px;width:180px">000062603310190100003</div><div class="td l" style="left:749px;width:100px">D0004</div><div class="td l" style="left:849px;width:160px">黄山休宁</div><div class="td r" style="left:1009px;width:100px">1</div><div class="td r" style="left:1109px;width:110px">100.00</div><div class="td r" style="left:1219px;width:110px">0.00</div><div class="td r" style="left:1329px;width:110px">100.00</div><div class="td r" style="left:1439px;width:120px">0.00</div><div class="td r" style="left:1559px;width:100px"></div></div>
<div class="tr" style="top:528px"><div class="td c" style="left:0px;width:49px">17</div><div class="td l" style="left:49px;width:100px">2026-04-04</div><div class="td l" style="left:149px;width:220px">分店2（平台小程序线上支付）</div><div class="td l" style="left:369px;width:100px">6</div><div class="td l" style="left:469px;width:100px">11111</div><div class="td l lk" style="left:569px;width:180px">000062604040320100001</div><div class="td l" style="left:749px;width:100px">D0002</div><div class="td l" style="left:849px;width:160px"></div><div class="td r" style="left:1009px;width:100px">1</div><div class="td r" style="left:1109px;width:110px">3.00</div><div class="td r" style="left:1219px;width:110px">0.00</div><div class="td r" style="left:1329px;width:110px">3.00</div><div class="td r" style="left:1439px;width:120px">0.00</div><div class="td r" style="left:1559px;width:100px"></div></div>
<div class="tr st" style="top:561px"><div class="td c" style="left:0px;width:49px">18</div><div class="td l" style="left:49px;width:100px">2026-04-03</div><div class="td l" style="left:149px;width:220px">分店1（支持线上支付/加盟）20</div><div class="td l" style="left:369px;width:100px">1</div><div class="td l" style="left:469px;width:100px">10000</div><div class="td l lk" style="left:569px;width:180px">000012604030000100002</div><div class="td l" style="left:749px;width:100px">W0004</div><div class="td l" style="left:849px;width:160px">就他佳</div><div class="td r" style="left:1009px;width:100px">1</div><div class="td r" style="left:1109px;width:110px">0.01</div><div class="td r" style="left:1219px;width:110px">0.00</div><div class="td r" style="left:1329px;width:110px">0.01</div><div class="td r" style="left:1439px;width:120px">0.00</div><div class="td r" style="left:1559px;width:100px"></div></div>
  </div>
  <div id="foot"><div class="td c" style="left:0px;width:49px">总计</div><div class="td l" style="left:49px;width:100px"></div><div class="td l" style="left:149px;width:220px"></div><div class="td l" style="left:369px;width:100px"></div><div class="td l" style="left:469px;width:100px"></div><div class="td l" style="left:569px;width:180px"></div><div class="td l" style="left:749px;width:100px"></div><div class="td l" style="left:849px;width:160px"></div><div class="td r" style="left:1009px;width:100px">83</div><div class="td r" style="left:1109px;width:110px">2,392.29</div><div class="td r" style="left:1219px;width:110px">366.52</div><div class="td r" style="left:1329px;width:110px">2,025.77</div><div class="td r" style="left:1439px;width:120px">0.00</div><div class="td r" style="left:1559px;width:100px"></div></div>
  <div class="fix1" style="top:0;height:702px"></div>
  <div id="vsc">
    <div class="tri" style="left:2px;top:3px;border-left:4px solid transparent;border-right:4px solid transparent;border-bottom:6px solid #888"></div>
    <div class="abs" style="left:3px;top:15px;width:7px;height:114px;border-radius:4px;background:#8a8a8a"></div>
    <div class="tri" style="left:2px;top:579px;border-left:4px solid transparent;border-right:4px solid transparent;border-top:6px solid #888"></div>
    <div class="tri" style="left:2px;top:593px;border-left:4px solid transparent;border-right:4px solid transparent;border-bottom:6px solid #888"></div>
    <div class="tri" style="left:2px;top:612px;border-left:4px solid transparent;border-right:4px solid transparent;border-top:6px solid #888"></div>
  </div>
  <div id="hscroll">
    <div class="tri" style="left:3px;top:2px;border-top:4px solid transparent;border-bottom:4px solid transparent;border-right:6px solid #888"></div>
    <div class="tri" style="left:39px;top:2px;border-top:4px solid transparent;border-bottom:4px solid transparent;border-left:6px solid #888"></div>
    <div class="tri" style="left:53px;top:2px;border-top:4px solid transparent;border-bottom:4px solid transparent;border-right:6px solid #888"></div>
    <div class="abs" style="left:65px;top:3px;width:276px;height:7px;border-radius:4px;background:#8a8a8a"></div>
    <div class="tri" style="left:1628px;top:2px;border-top:4px solid transparent;border-bottom:4px solid transparent;border-left:6px solid #888"></div>
  </div>
</div>
<div id="colpanel">
  <div class="abs" style="left:5px;top:16px"><svg width="11" height="9" viewBox="0 0 11 9"><rect x=".5" y=".5" width="10" height="8" fill="none" stroke="#111" stroke-width="1"/><rect x="0" y="0" width="11" height="2.5" fill="#111"/><path d="M3.8 2.5v6M7.2 2.5v6" stroke="#111" stroke-width="1"/></svg></div>
  <div class="abs" style="left:4px;top:29px;line-height:20px;font-size:14px;color:#111;-webkit-text-stroke:0">列</div>
  <div class="abs" style="left:0;top:59px;width:19px;height:1px;background:#e6e6e6"></div>
</div>

<!-- pagination -->
<div class="abs" style="left:1678px;top:938px;line-height:20px;color:#333">共87条</div>
<div class="abs" style="left:1738px;top:943px"><svg width="7" height="11" viewBox="0 0 7 11"><path d="M6 1L1.5 5.5 6 10" fill="none" stroke="#bbb" stroke-width="1.2"/></svg></div>
<div class="abs" style="left:1753px;top:936px;width:24px;height:24px;border-radius:7px;background:#4a6ee6;color:#fff;text-align:center;line-height:24px;font-size:14px">1</div>
<div class="abs" style="left:1786px;top:943px"><svg width="7" height="11" viewBox="0 0 7 11"><path d="M1 1l4.5 4.5L1 10" fill="none" stroke="#bbb" stroke-width="1.2"/></svg></div>
<div class="abs" style="left:1803px;top:936px;width:93px;height:24px;border:1px solid #d9d9d9;border-radius:7px"><div class="abs" style="left:5px;top:1px;line-height:20px;color:#222">200 条/页</div><div class="abs" style="left:73px;top:8px"><svg width="11" height="7" viewBox="0 0 11 7"><path d="M1 1l4.5 4.5L1 10" transform="rotate(90 5.5 3.5) translate(2.5 -2)" fill="none" stroke="#555" stroke-width="1.3"/></svg></div></div>
</body></html>
